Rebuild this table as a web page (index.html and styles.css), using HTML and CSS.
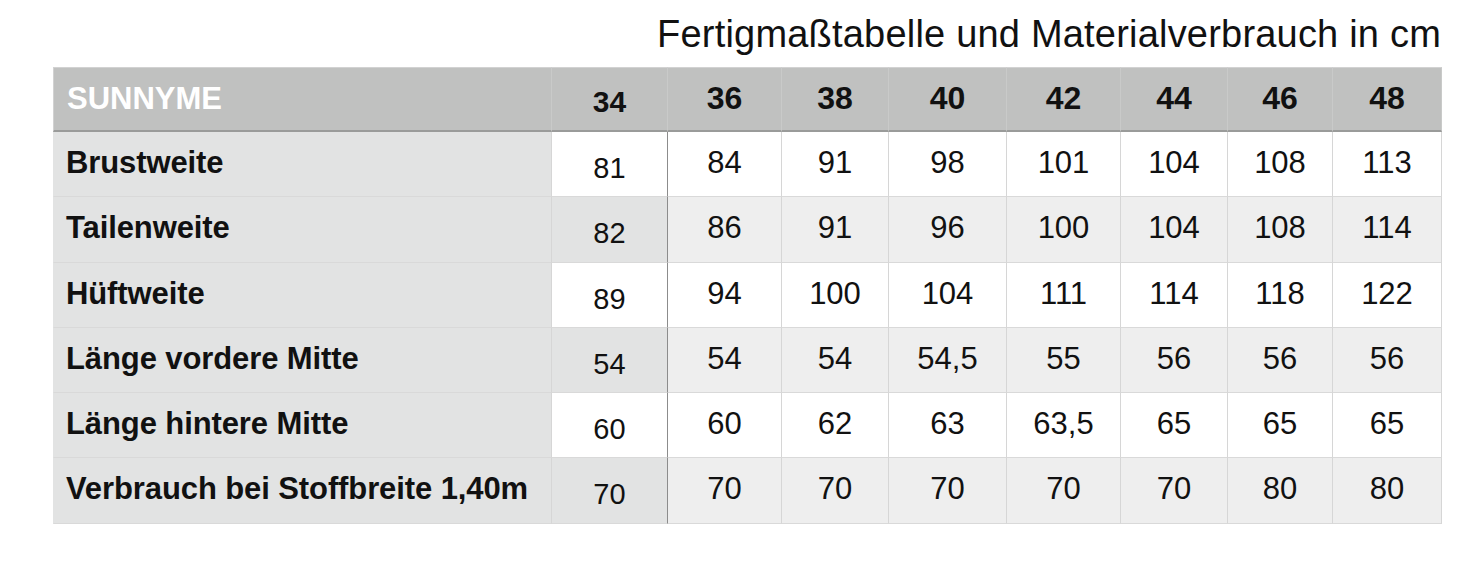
FILE: index.html
```html
<!DOCTYPE html>
<html lang="de">
<head>
<meta charset="utf-8">
<title>Fertigmaßtabelle</title>
<link rel="stylesheet" href="styles.css">
</head>
<body>
<div class="sheet">
  <h1 class="title">Fertigmaßtabelle und Materialverbrauch in cm</h1>
  <table class="sizes">
    <colgroup>
      <col class="c-label">
      <col class="c-34">
      <col class="c-36">
      <col class="c-38">
      <col class="c-40">
      <col class="c-42">
      <col class="c-44">
      <col class="c-46">
      <col class="c-48">
    </colgroup>
    <thead>
      <tr>
        <th class="brand">SUNNYME</th>
        <th class="first">34</th>
        <th>36</th>
        <th>38</th>
        <th>40</th>
        <th>42</th>
        <th>44</th>
        <th>46</th>
        <th>48</th>
      </tr>
    </thead>
    <tbody>
      <tr>
        <th class="label">Brustweite</th>
        <td class="first">81</td>
        <td>84</td><td>91</td><td>98</td><td>101</td><td>104</td><td>108</td><td>113</td>
      </tr>
      <tr class="alt">
        <th class="label">Tailenweite</th>
        <td class="first">82</td>
        <td>86</td><td>91</td><td>96</td><td>100</td><td>104</td><td>108</td><td>114</td>
      </tr>
      <tr>
        <th class="label">Hüftweite</th>
        <td class="first">89</td>
        <td>94</td><td>100</td><td>104</td><td>111</td><td>114</td><td>118</td><td>122</td>
      </tr>
      <tr class="alt">
        <th class="label">Länge vordere Mitte</th>
        <td class="first">54</td>
        <td>54</td><td>54</td><td>54,5</td><td>55</td><td>56</td><td>56</td><td>56</td>
      </tr>
      <tr>
        <th class="label">Länge hintere Mitte</th>
        <td class="first">60</td>
        <td>60</td><td>62</td><td>63</td><td>63,5</td><td>65</td><td>65</td><td>65</td>
      </tr>
      <tr class="alt tall">
        <th class="label">Verbrauch bei Stoffbreite 1,40m</th>
        <td class="first">70</td>
        <td>70</td><td>70</td><td>70</td><td>70</td><td>70</td><td>80</td><td>80</td>
      </tr>
    </tbody>
  </table>
</div>
</body>
</html>
```

FILE: styles.css
```css
html, body {
  margin: 0;
  padding: 0;
  background: #ffffff;
}

body {
  font-family: "Liberation Sans", Arial, sans-serif;
  color: #111111;
}

.sheet {
  margin-left: 53px;
  width: 1389px;
}

.title {
  margin: 0 0 11px 0;
  padding-top: 12px;
  font-family: "Liberation Sans", Arial, sans-serif;
  font-weight: normal;
  font-size: 38px;
  letter-spacing: 0.2px;
  line-height: 44px;
  text-align: right;
  padding-right: 1px;
  color: #111111;
}

.sizes {
  width: 1389px;
  table-layout: fixed;
  border-collapse: separate;
  border-spacing: 0;
}

.c-label { width: 499px; }
.c-34 { width: 116px; }
.c-36 { width: 114px; }
.c-38 { width: 107px; }
.c-40 { width: 118px; }
.c-42 { width: 114px; }
.c-44 { width: 107px; }
.c-46 { width: 105px; }
.c-48 { width: 109px; }

.sizes th,
.sizes td {
  padding: 0;
  text-align: center;
  vertical-align: middle;
  line-height: 36px;
  border-right: 1px solid #d6d6d6;
  border-bottom: 1px solid #d9d9d9;
  white-space: nowrap;
}

/* header */
.sizes thead tr {
  height: 65px;
}

.sizes thead th {
  background: #c0c1c0;
  border-top: 1px solid #d2d2d2;
  border-bottom: 2px solid #9a9b9a;
  border-right: 1px solid #c9cac9;
  font-size: 32px;
  font-weight: bold;
  padding-bottom: 3px;
  color: #111111;
}

.sizes thead th.brand {
  text-align: left;
  padding-left: 13px;
  padding-bottom: 0;
  font-size: 31px;
  color: #ffffff;
  border-left: 1px solid #d2d2d2;
}

.sizes thead th.first {
  font-size: 30px;
  padding-top: 6px;
  padding-bottom: 0;
}

/* body */
.sizes tbody tr {
  height: 65px;
}

.sizes tbody tr:nth-child(2),
.sizes tbody tr.tall {
  height: 66px;
}

.sizes tbody th.label {
  text-align: left;
  padding-left: 12px;
  padding-bottom: 3px;
  font-size: 31px;
  font-weight: bold;
  letter-spacing: -0.1px;
  background: #e2e3e3;
  border-left: 1px solid #e2e3e3;
}

.sizes tbody td {
  font-size: 31px;
  padding-bottom: 3px;
  background: #ffffff;
}

.sizes tbody tr.alt td {
  background: #eeeeee;
}

.sizes tbody td.first {
  font-family: "Liberation Sans", Arial, sans-serif;
  font-size: 29px;
  padding-top: 7px;
  padding-bottom: 0;
  background: #ffffff;
  border-right: 1px solid #8c8c8c;
}

.sizes tbody tr.alt td.first {
  background: #e2e3e3;
}
```
